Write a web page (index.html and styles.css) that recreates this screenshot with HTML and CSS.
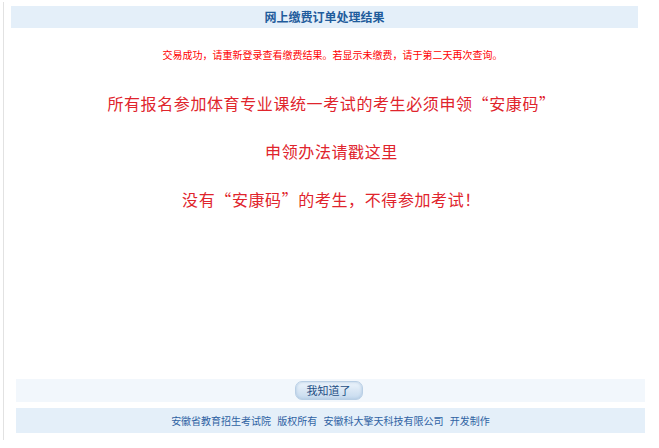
FILE: index.html
```html
<!DOCTYPE html>
<html lang="zh-CN">
<head>
<meta charset="utf-8">
<title>网上缴费订单处理结果</title>
<link rel="stylesheet" href="styles.css">
</head>
<body>
<div class="page">
  <div class="title-bar">网上缴费订单处理结果</div>
  <div class="notice">交易成功，请重新登录查看缴费结果。若显示未缴费，请于第二天再次查询。</div>
  <div class="big">
    <p>所有报名参加体育专业课统一考试的考生必须申领“安康码”</p>
    <p>申领办法请戳这里</p>
    <p>没有“安康码”的考生，不得参加考试！</p>
  </div>
  <div class="btn-row"><button class="btn" type="button">我知道了</button></div>
  <div class="footer">安徽省教育招生考试院 版权所有 安徽科大擎天科技有限公司 开发制作</div>
</div>
</body>
</html>
```
FILE: styles.css
```css
html, body {
  margin: 0;
  padding: 0;
  background: #ffffff;
  font-family: "Noto Sans CJK SC", "Noto Sans", sans-serif;
}
.page {
  margin: 2px 0 0 3px;
  height: 431px;
  padding-bottom: 7px;
  border-left: 1px solid #e2e2e2;
  display: flex;
  flex-direction: column;
}
.title-bar {
  margin: 4px 0 0 7px;
  width: 627px;
  height: 22px;
  line-height: 22px;
  background: #e4eff9;
  color: #1f5c9c;
  font-size: 12px;
  font-weight: bold;
  text-align: center;
}
.notice {
  margin-top: 20px;
  height: 14px;
  line-height: 14px;
  font-size: 10px;
  color: #ff0000;
  text-align: center;
  padding-left: 2px;
}
.big {
  margin-top: 17px;
  text-align: center;
  color: #e0242c;
  font-size: 16px;
  letter-spacing: 0.6px;
}
.big p {
  margin: 0;
  height: 48px;
  line-height: 48px;
}
.btn-row {
  margin: auto 0 0 12px;
  width: 629px;
  height: 23px;
  background: #f2f7fc;
  display: flex;
  justify-content: center;
  align-items: center;
}
.btn {
  margin-left: -4px;
  width: 68px;
  height: 19px;
  padding: 0;
  border: 1px solid #b9cfe5;
  border-radius: 7px;
  background: linear-gradient(#eef5fc 0%, #dbe8f5 45%, #c6daee 100%);
  box-shadow: inset 0 0 3px #aac4de;
  color: #1f4f85;
  font-family: "Noto Sans CJK SC", sans-serif;
  font-size: 11px;
  line-height: 17px;
}
.footer {
  margin: 6px 0 0 12px;
  width: 629px;
  height: 25px;
  line-height: 25px;
  background: #e4eff9;
  color: #2f62a3;
  font-size: 10px;
  word-spacing: 4px;
  text-align: center;
}
```
